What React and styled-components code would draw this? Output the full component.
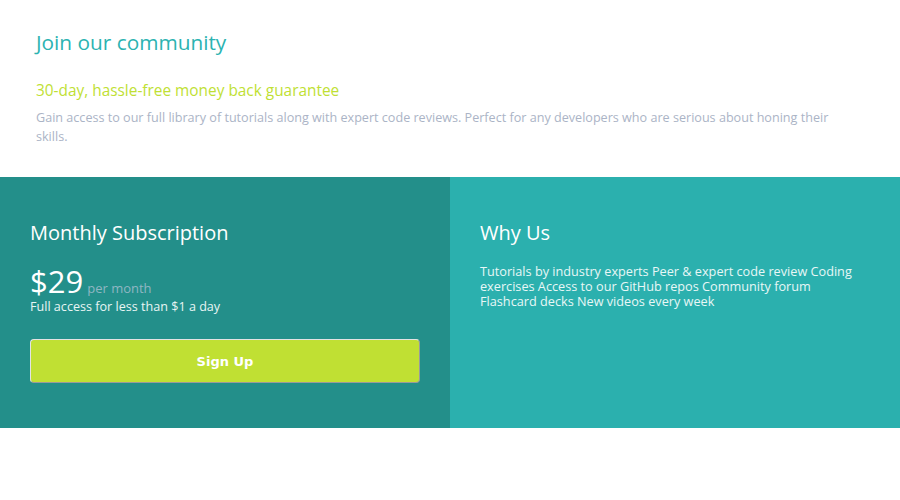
import React from "react";
import styled, { createGlobalStyle } from "styled-components";

const Global = createGlobalStyle`
  body {
    margin: 0;
    background: #ffffff;
    font-family: "Open Sans", "Liberation Sans", sans-serif;
  }
`;

const whyUs = [
  "Tutorials by industry experts",
  "Peer & expert code review",
  "Coding exercises",
  "Access to our GitHub repos",
  "Community forum",
  "Flashcard decks",
  "New videos every week",
];

const App = () => {
  return (
    <>
      <Global />
      <Page>
        <Intro>
          <Heading>Join our community</Heading>
          <Guarantee>30-day, hassle-free money back guarantee</Guarantee>
          <IntroText>
            Gain access to our full library of tutorials along with expert code reviews. Perfect for any developers who are serious about honing their skills.
          </IntroText>
        </Intro>
        <Panels>
          <Subscription>
            <PanelTitle>Monthly Subscription</PanelTitle>
            <PriceRow>
              <Price>$29</Price>
              <Period>per month</Period>
            </PriceRow>
            <SmallText>Full access for less than $1 a day</SmallText>
            <SignUp>Sign Up</SignUp>
          </Subscription>
          <WhyUs>
            <PanelTitle>Why Us</PanelTitle>
            <List>{whyUs.join(" ")}</List>
          </WhyUs>
        </Panels>
      </Page>
    </>
  );
};

export default App;

const Page = styled.div`
  width: 900px;
`;

const Intro = styled.div`
  padding: 28px 36px 31px;
`;

const Heading = styled.h1`
  margin: 0;
  font-size: 20.8px;
  font-weight: 400;
  color: #2bb3b1;
  line-height: 28px;
`;

const Guarantee = styled.h2`
  margin: 24px 0 6px;
  font-size: 15.4px;
  font-weight: 400;
  color: #c0df34;
  line-height: 22px;
`;

const IntroText = styled.p`
  margin: 0;
  max-width: 810px;
  font-size: 12.6px;
  line-height: 19px;
  color: #abb4c6;
`;

const Panels = styled.div`
  display: grid;
  grid-template-columns: 1fr 1fr;
  height: 251px;
`;

const Subscription = styled.div`
  background: #238f8a;
  padding: 44px 30px 0;
  color: #ffffff;
`;

const WhyUs = styled.div`
  background: #2bb0ae;
  padding: 44px 30px 0;
  color: #ffffff;
`;

const PanelTitle = styled.h3`
  margin: 0;
  font-size: 20px;
  font-weight: 400;
  line-height: 24px;
`;

const PriceRow = styled.div`
  display: flex;
  align-items: baseline;
  gap: 4px;
  margin-top: 19px;
`;

const Price = styled.span`
  font-size: 31px;
  line-height: 34px;
`;

const Period = styled.span`
  font-size: 13px;
  color: #8fb6c2;
`;

const SmallText = styled.p`
  margin: 0;
  font-size: 12.6px;
  line-height: 18px;
  color: #e8f5f4;
`;

const SignUp = styled.button`
  display: block;
  width: 100%;
  height: 44px;
  margin-top: 23px;
  background: #c0e033;
  color: #ffffff;
  font-family: "DejaVu Sans", sans-serif;
  font-weight: 700;
  font-size: 13px;
  border: 1px solid #e3e3e3;
  border-bottom-color: #9a9a9a;
  border-right-color: #9a9a9a;
  border-radius: 4px;
`;

const List = styled.p`
  margin: 19px 0 0;
  font-size: 12.7px;
  line-height: 15px;
  color: #e8f7f6;
`;
